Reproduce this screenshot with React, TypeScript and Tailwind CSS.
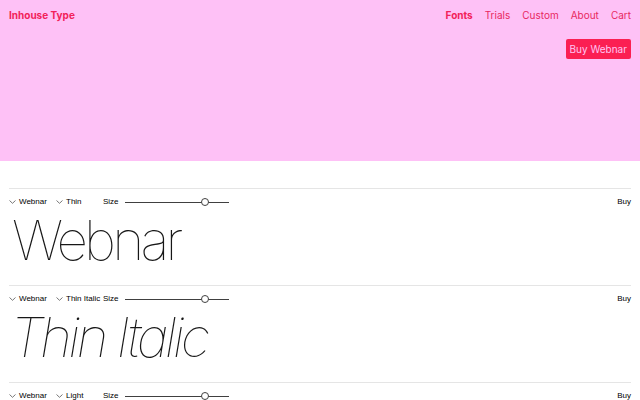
import React from "react";

type Specimen = {
  family: string;
  style: string;
  sample: string;
  italic?: boolean;
  weight: string;
};

const specimens: Specimen[] = [
  { family: "Webnar", style: "Thin", sample: "Webnar", weight: "font-thin" },
  { family: "Webnar", style: "Thin Italic", sample: "Thin Italic", italic: true, weight: "font-thin" },
  { family: "Webnar", style: "Light", sample: "Light", weight: "font-light" },
];

const navLinks = ["Fonts", "Trials", "Custom", "About", "Cart"];

function Chevron() {
  return (
    <svg width="7" height="4" viewBox="0 0 7 4" className="shrink-0">
      <path d="M0.5 0.5 L3.5 3.3 L6.5 0.5" fill="none" stroke="#555" strokeWidth="0.8" />
    </svg>
  );
}

function SizeSlider() {
  return (
    <div className="relative w-[104px] h-[10px] flex items-center">
      <div className="w-full h-px bg-neutral-700" />
      <div className="absolute left-[76px] top-[1px] w-[8px] h-[8px] rounded-full border border-neutral-700 bg-white" />
    </div>
  );
}

function SpecimenRow({ s }: { s: Specimen }) {
  return (
    <section className="mx-[9px] border-t border-neutral-200">
      <div className="h-[26px] flex items-center text-[8px] text-black font-['Liberation_Sans',sans-serif]">
        <div className="flex items-center gap-[3px] w-[47px]">
          <Chevron />
          <span>{s.family}</span>
        </div>
        <div className="flex items-center gap-[3px] w-[47px]">
          <Chevron />
          <span className="whitespace-nowrap">{s.style}</span>
        </div>
        <span className="mr-[6px]">Size</span>
        <SizeSlider />
        <span className="ml-auto">Buy</span>
      </div>
      <div
        className={`text-[55px] leading-[55px] pt-[-2px] pb-[15px] tracking-[-0.07em] text-neutral-900 -mt-[2px] mb-[2px] ${s.weight} ${
          s.italic ? "italic pl-[1px]" : "pl-[3px]"
        }`}
      >
        {s.sample}
      </div>
    </section>
  );
}

export default function App() {
  return (
    <div className="h-screen bg-white font-['Inter',sans-serif] overflow-hidden">
      <header className="h-[161px] bg-[#fec1f6] px-[9px] pt-[8px]">
        <div className="flex items-center justify-between">
          <div className="text-[10px] font-bold text-[#f2215a]">Inhouse Type</div>
          <nav className="flex items-center gap-[12px] text-[10px] text-[#e8285f]">
            {navLinks.map((l) => (
              <a key={l} className={l === "Fonts" ? "font-bold text-[#f2215a]" : ""}>
                {l}
              </a>
            ))}
          </nav>
        </div>
        <div className="flex justify-end mt-[16px]">
          <button className="h-[20px] px-[4px] rounded-[2px] bg-[#fb1f52] text-[10px] text-[#ffc4f3]">
            Buy Webnar
          </button>
        </div>
      </header>
      <div className="pt-[27px]">
        {specimens.map((s) => (
          <SpecimenRow key={s.style} s={s} />
        ))}
      </div>
    </div>
  );
}
